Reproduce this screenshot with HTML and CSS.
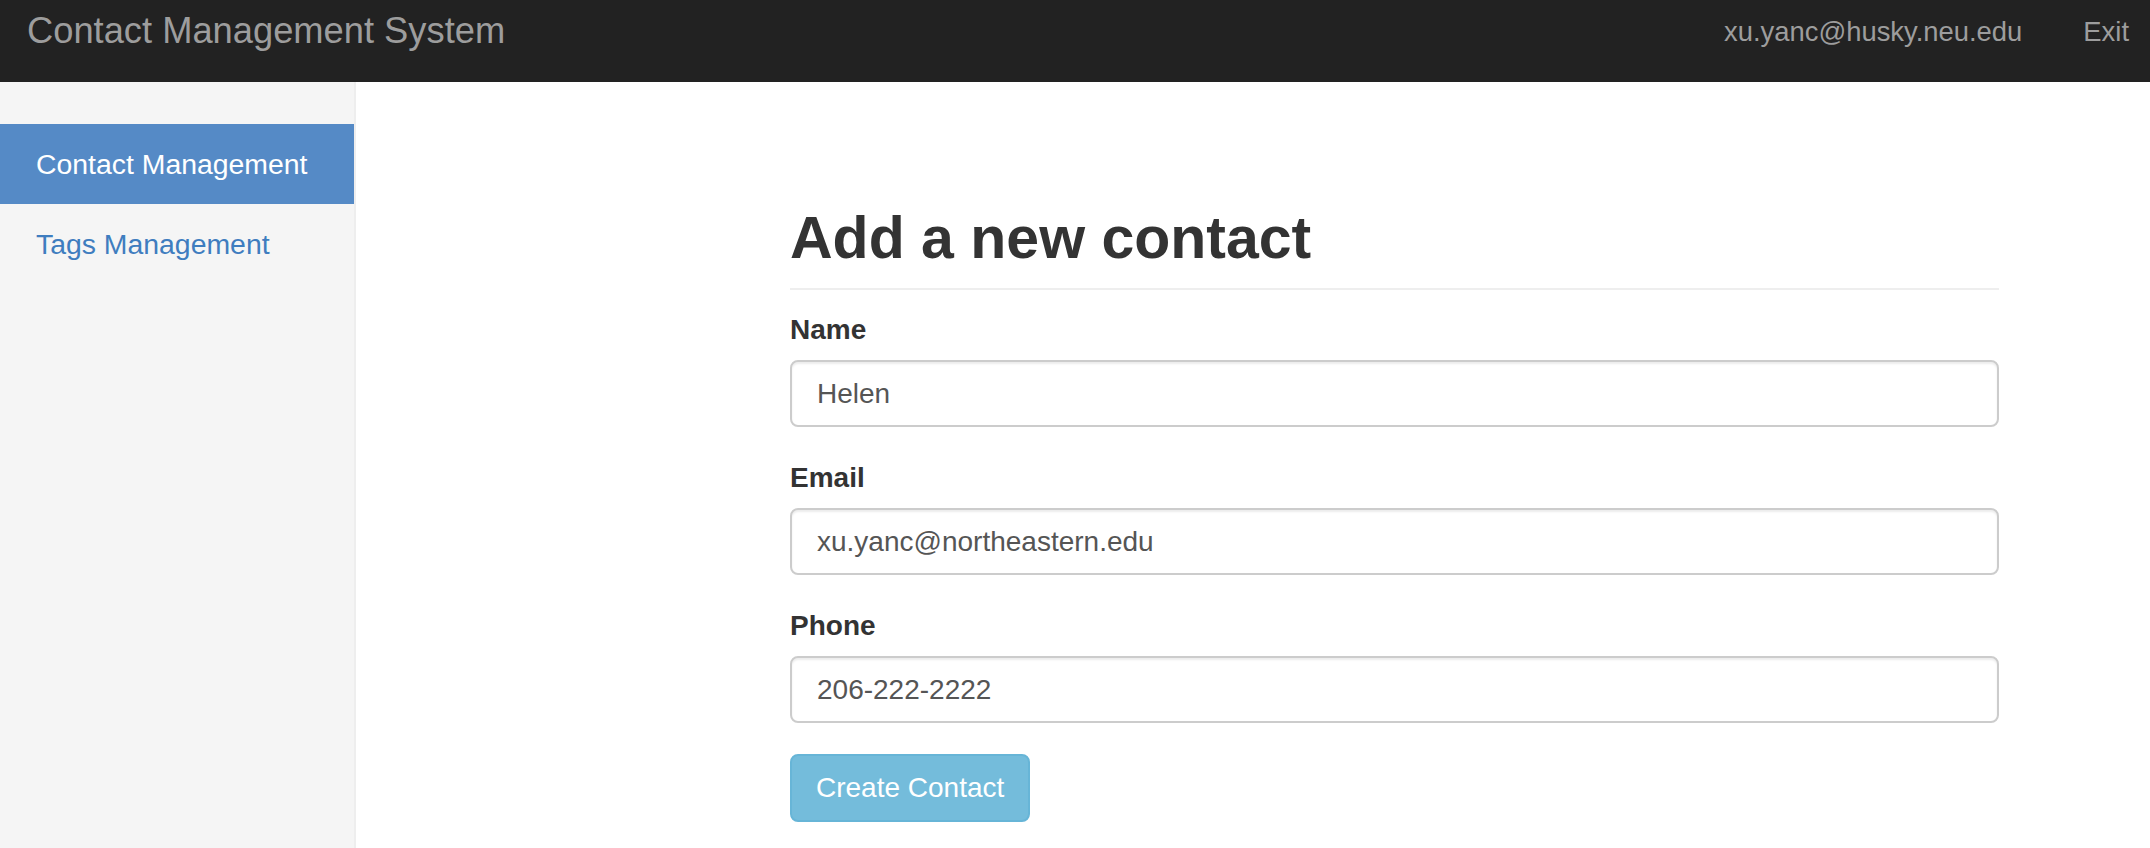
FILE: index.html
```html
<!DOCTYPE html>
<html lang="en">
<head>
<meta charset="utf-8">
<title>Contact Management System</title>
<link rel="stylesheet" href="styles.css">
</head>
<body>
<header class="navbar">
  <a class="brand" href="#">Contact Management System</a>
  <nav class="nav-right">
    <a href="#">xu.yanc@husky.neu.edu</a>
    <a href="#">Exit</a>
  </nav>
</header>
<div class="layout">
  <aside class="sidebar">
    <ul class="nav-sidebar">
      <li class="active"><a href="#">Contact Management</a></li>
      <li><a href="#">Tags Management</a></li>
    </ul>
  </aside>
  <main class="main">
    <div class="panel">
      <h2 class="page-header">Add a new contact</h2>
      <form class="contact-form">
        <div class="form-group">
          <label for="name">Name</label>
          <input id="name" class="form-control" type="text" value="Helen">
        </div>
        <div class="form-group">
          <label for="email">Email</label>
          <input id="email" class="form-control" type="text" value="xu.yanc@northeastern.edu">
        </div>
        <div class="form-group">
          <label for="phone">Phone</label>
          <input id="phone" class="form-control" type="text" value="206-222-2222">
        </div>
        <button type="button" class="btn-info">Create Contact</button>
      </form>
    </div>
  </main>
</div>
</body>
</html>
```

FILE: styles.css
```css
* { box-sizing: border-box; }

html, body {
  margin: 0;
  height: 100%;
  overflow: hidden;
}

body {
  font-family: "Liberation Sans", Arial, Helvetica, sans-serif;
  color: #333;
  background: #fff;
  display: flex;
  flex-direction: column;
}

a { text-decoration: none; }

.navbar {
  flex: 0 0 82px;
  height: 82px;
  background: #222;
  display: flex;
  justify-content: space-between;
  align-items: flex-start;
}

.brand {
  padding: 11px 0 0 27px;
  font-size: 36.3px;
  line-height: 40px;
  color: #9d9d9d;
}

.nav-right {
  display: flex;
  gap: 61px;
  padding: 12px 21px 0 0;
}

.nav-right a {
  font-size: 27.4px;
  line-height: 40px;
  color: #9d9d9d;
}

.layout {
  flex: 1;
  display: grid;
  grid-template-columns: 356px 1fr;
  min-height: 0;
}

.sidebar {
  background: #f5f5f5;
  border-right: 2px solid #eee;
  padding-top: 42px;
}

.nav-sidebar {
  list-style: none;
  margin: 0;
  padding: 0;
}

.nav-sidebar a {
  display: block;
  padding: 20px 36px;
  font-size: 28.4px;
  line-height: 40px;
  color: #3f7dbf;
}

.nav-sidebar .active a {
  background: #558ac6;
  color: #fff;
}

.main {
  padding: 123px 0 0 434px;
}

.panel {
  width: 1209px;
}

.page-header {
  margin: 0;
  padding-bottom: 17px;
  border-bottom: 2px solid #eee;
  font-size: 59px;
  line-height: 66px;
  font-weight: bold;
  color: #333;
}

.contact-form {
  margin-top: 20px;
}

.form-group {
  margin-bottom: 31px;
}

.form-group label {
  display: block;
  margin-bottom: 10px;
  font-size: 28px;
  line-height: 40px;
  font-weight: bold;
  color: #333;
}

.form-control {
  display: block;
  width: 100%;
  height: 67px;
  padding: 0 25px;
  border: 2px solid #ccc;
  border-radius: 8px;
  box-shadow: inset 0 2px 2px rgba(0, 0, 0, 0.075);
  font-family: inherit;
  font-size: 28px;
  color: #555;
  background: #fff;
}

.btn-info {
  display: inline-block;
  padding: 12px 24px;
  border: 2px solid #67b5d7;
  border-radius: 8px;
  background: #74bcdb;
  color: #fff;
  font-family: inherit;
  font-size: 28px;
  line-height: 40px;
  cursor: pointer;
}
```
